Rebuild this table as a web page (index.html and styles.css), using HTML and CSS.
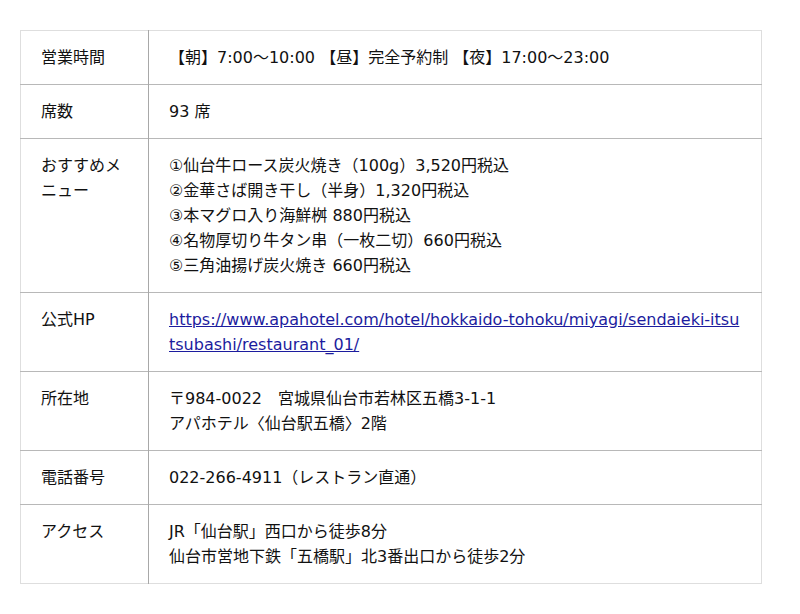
FILE: index.html
```html
<!DOCTYPE html>
<html lang="ja">
<head>
<meta charset="utf-8">
<link rel="stylesheet" href="styles.css">
</head>
<body>
<div class="wrap">
<table class="info">
<tr><th>営業時間</th><td>【朝】7:00～10:00 【昼】完全予約制 【夜】17:00～23:00</td></tr>
<tr><th>席数</th><td>93 席</td></tr>
<tr><th>おすすめメニュー</th><td>①仙台牛ロース炭火焼き（100g）3,520円税込<br>②金華さば開き干し（半身）1,320円税込<br>③本マグロ入り海鮮桝 880円税込<br>④名物厚切り牛タン串（一枚二切）660円税込<br>⑤三角油揚げ炭火焼き 660円税込</td></tr>
<tr><th>公式HP</th><td><a class="link" href="#">https://www.apahotel.com/hotel/hokkaido-tohoku/miyagi/sendaieki-itsutsubashi/restaurant_01/</a></td></tr>
<tr><th>所在地</th><td>〒984-0022　宮城県仙台市若林区五橋3-1-1<br>アパホテル〈仙台駅五橋〉2階</td></tr>
<tr><th>電話番号</th><td>022-266-4911（レストラン直通）</td></tr>
<tr><th>アクセス</th><td>JR「仙台駅」西口から徒歩8分<br>仙台市営地下鉄「五橋駅」北3番出口から徒歩2分</td></tr>
</table>
</div>
</body>
</html>
```
FILE: styles.css
```css
html, body { margin: 0; padding: 0; background: #fff; }
body {
  font-family: "DejaVu Sans", "Noto Sans CJK JP", sans-serif;
  font-size: 16px;
  line-height: 25px;
  color: #111;
}
.wrap { padding: 30px 38px 0 20px; }
.info {
  width: 742px;
  border-collapse: collapse;
  border: 1px solid #dedede;
  table-layout: fixed;
}
.info th, .info td {
  border-top: 1px solid #b8b8b8;
  padding: 14px 21px 14px 20px;
  vertical-align: top;
  text-align: left;
  font-weight: normal;
}
.info th { width: 86px; border-right: 1px solid #a8a8a8; }
.info tr:first-child th, .info tr:first-child td { border-top: 1px solid #dedede; }
.info td { word-break: break-all; }
.link { color: #1c1c9e; text-decoration: underline; }
```
